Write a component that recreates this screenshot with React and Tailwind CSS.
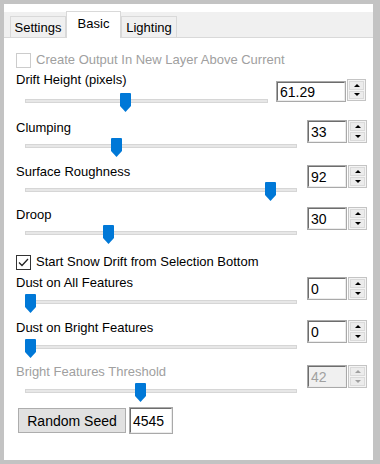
import React from "react";

const rows = [
  {
    label: "Drift Height (pixels)",
    value: "61.29",
    thumb: 95,
    wide: true,
    mt: "mt-[4px]",
    zoneMt: "mt-[3px]",
    spinMt: "mt-[8px]",
  },
  { label: "Clumping", value: "33", thumb: 86, mt: "mt-[7px]", zoneMt: "mt-0", spinMt: "mt-0" },
  { label: "Surface Roughness", value: "92", thumb: 240, mt: "mt-[6px]", zoneMt: "mt-0", spinMt: "mt-[1px]" },
  { label: "Droop", value: "30", thumb: 78, mt: "mt-[5px]", zoneMt: "mt-0", spinMt: "mt-0" },
];

const rows2 = [
  { label: "Dust on All Features", value: "0", thumb: 0, mt: "mt-[5px]", zoneMt: "mt-[1px]", spinMt: "mt-[2px]" },
  { label: "Dust on Bright Features", value: "0", thumb: 0, mt: "mt-[6px]", zoneMt: "mt-[1px]", spinMt: "mt-0" },
  {
    label: "Bright Features Threshold",
    value: "42",
    thumb: 110,
    disabled: true,
    mt: "mt-[5px]",
    zoneMt: "mt-[1px]",
    spinMt: "mt-[1px]",
  },
];

const Arrow = ({ up, disabled }) => (
  <div
    className={`w-0 h-0 border-x-[3px] border-x-transparent ${
      up
        ? "border-b-[3px] " + (disabled ? "border-b-[#a0a0a0]" : "border-b-black")
        : "border-t-[3px] " + (disabled ? "border-t-[#a0a0a0]" : "border-t-black")
    }`}
  />
);

const Spinner = ({ value, wide, disabled, spinMt }) => (
  <div className={`flex items-start gap-[1px] ${wide ? "ml-[8px]" : "ml-[10px]"} ${spinMt}`}>
    <div
      className={`border border-[#a9a9a9] ${wide ? "w-[70px] h-[21px] mt-[1px]" : "w-[40px] h-[23px]"}`}
    >
      <div
        className={`h-full border-t border-l border-t-[#6d6d6d] border-l-[#6d6d6d] border-r border-b border-r-[#ececec] border-b-[#ececec] pl-[2px] flex items-center ${
          disabled ? "bg-[#f0f0f0] text-[#a0a0a0]" : "bg-white"
        }`}
      >
        <span className="text-[14px] leading-[16px]">{value}</span>
      </div>
    </div>
    <div
      className={`w-[19px] flex flex-col border border-[#c4c4c4] bg-[#f4f4f4] p-[1px] gap-[1px] ${
        wide ? "h-[22px] -mt-[1px]" : "h-[23px]"
      }`}
    >
      <div className="flex-1 flex items-center justify-center bg-[#ececec] border border-[#dadada]">
        <Arrow up disabled={disabled} />
      </div>
      <div className="flex-1 flex items-center justify-center bg-[#ececec] border border-[#dadada]">
        <Arrow disabled={disabled} />
      </div>
    </div>
  </div>
);

const SliderRow = ({ item }) => (
  <div className={`flex items-start ${item.mt}`}>
    <div className="flex flex-col">
      <div className={`h-[16px] ${item.disabled ? "text-[#a0a0a0]" : ""}`}>{item.label}</div>
      <div className={`relative h-[22px] ml-[9px] ${item.wide ? "w-[243px]" : "w-[272px]"} ${item.zoneMt}`}>
        <div className="mt-[8px] h-[4px] bg-[#e7e7e7] border border-[#d6d6d6]" />
        <svg
          width="11"
          height="19"
          viewBox="0 0 11 19"
          className="absolute top-[2px]"
          style={{ left: item.thumb }}
        >
          <path d="M0 1 Q0 0 1 0 H10 Q11 0 11 1 V13 L5.5 19 L0 13 Z" fill="#0078d7" />
        </svg>
      </div>
    </div>
    <Spinner value={item.value} wide={item.wide} disabled={item.disabled} spinMt={item.spinMt} />
  </div>
);

const Tab = ({ label, active }) =>
  active ? (
    <div className="relative z-10 -mb-px h-[27px] w-[55px] bg-white border border-b-0 border-[#d9d9d9] flex justify-center pt-[4px]">
      {label}
    </div>
  ) : (
    <div className="h-[21px] w-[56px] bg-[#f0f0f0] border border-b-0 border-[#d9d9d9] flex justify-center pt-[3px]">
      {label}
    </div>
  );

export default function App() {
  return (
    <div className="w-[380px] h-[464px] bg-[#c3c3c3] pt-[4px] pl-[4px] pr-[7px] pb-[4px] font-['Liberation_Sans',Arial,sans-serif] text-[13px] leading-[16px] text-black">
      <div className="h-full bg-white flex flex-col">
        <div className="h-[8px]" />
        <div className="h-[26px] bg-[#f0f0f0] border-b border-[#d9d9d9] flex items-end pl-[6px]">
          <Tab label="Settings" />
          <Tab label="Basic" active />
          <Tab label="Lighting" />
        </div>
        <div className="flex-1 flex flex-col pl-[12px]">
          <div className="mt-[14px] h-[16px] flex items-center gap-[5px] text-[#a0a0a0]">
            <div className="w-[15px] h-[15px] border border-[#cccccc] bg-white" />
            <span>Create Output In New Layer Above Current</span>
          </div>
          {rows.map((item, index) => (
            <SliderRow key={index} item={item} />
          ))}
          <div className="mt-[9px] h-[16px] flex items-center gap-[5px]">
            <div className="w-[15px] h-[15px] border border-[#333333] bg-white flex items-center justify-center">
              <svg width="11" height="9" viewBox="0 0 11 9">
                <path d="M1 4.5 L4 7.5 L10 1" fill="none" stroke="#222" strokeWidth="1.3" />
              </svg>
            </div>
            <span>Start Snow Drift from Selection Bottom</span>
          </div>
          {rows2.map((item, index) => (
            <SliderRow key={index} item={item} />
          ))}
          <div className="mt-[4px] flex items-start gap-[3px] ml-[2px]">
            <div className="mt-[1px] w-[108px] h-[25px] bg-[#e1e1e1] border border-[#adadad] flex items-center justify-center text-[14px]">
              Random Seed
            </div>
            <div className="w-[44px] h-[27px] border border-[#a9a9a9]">
              <div className="h-full border-t border-l border-t-[#6d6d6d] border-l-[#6d6d6d] border-r border-b border-r-[#ececec] border-b-[#ececec] pl-[2px] flex items-center bg-white">
                <span className="text-[14px]">4545</span>
              </div>
            </div>
          </div>
        </div>
      </div>
    </div>
  );
}
